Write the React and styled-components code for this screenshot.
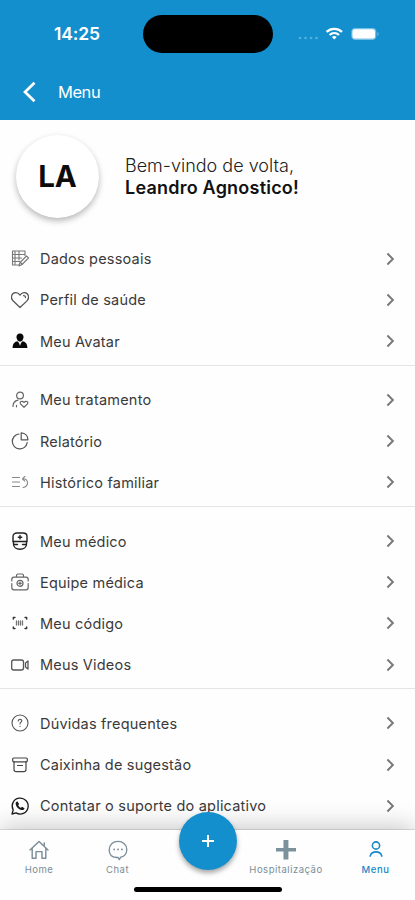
import React from 'react';
import styled, { createGlobalStyle } from 'styled-components';

const GlobalStyle = createGlobalStyle`
  * {
    box-sizing: border-box;
  }
  body {
    margin: 0;
    background: #fff;
    font-family: Inter, 'Liberation Sans', sans-serif;
  }
`;

const Screen = styled.div`
  width: 415px;
  height: 900px;
  display: flex;
  flex-direction: column;
  overflow: hidden;
  background: #fefefe;
`;

const Header = styled.header`
  flex: none;
  height: 119.5px;
  background: #148fcd;
  color: #fff;
`;

const StatusBar = styled.div`
  height: 67px;
  display: grid;
  grid-template-columns: 143px 130px 1fr;
  align-items: center;
`;

const Clock = styled.div`
  padding-left: 54px;
  font-size: 17.5px;
  font-weight: 600;
  letter-spacing: -0.15px;
`;

const Island = styled.div`
  height: 38px;
  border-radius: 19px;
  background: #000;
`;

const StatusIcons = styled.div`
  display: flex;
  align-items: center;
  padding-left: 24px;
  svg {
    display: block;
  }
`;

const TitleBar = styled.div`
  height: 50px;
  display: flex;
  align-items: center;
  padding-left: 22px;
  font-size: 16.5px;
  font-weight: 400;
  letter-spacing: -0.45px;
  svg {
    margin-right: 22px;
  }
`;

const Content = styled.main`
  flex: 1;
  min-height: 0;
  overflow: hidden;
`;

const Profile = styled.section`
  height: 118.6px;
  display: flex;
  align-items: flex-start;
  padding: 15px 0 0 16px;
`;

const Avatar = styled.div`
  width: 83px;
  height: 83px;
  margin-right: 26px;
  display: flex;
  align-items: center;
  justify-content: center;
  border-radius: 50%;
  background: #fff;
  box-shadow: 0 3px 6px rgba(0, 0, 0, 0.28);
  color: #0c0c0c;
  font-size: 29.5px;
  font-weight: 700;
`;

const Welcome = styled.div`
  padding-top: 20px;
  color: #222;
  font-size: 18px;
  font-weight: 300;
  line-height: 22px;
  white-space: nowrap;
  strong {
    display: block;
    color: #111;
    font-weight: 600;
    font-size: 18px;
    letter-spacing: 0.22px;
  }
`;

const Group = styled.ul`
  margin: 0 0 13.6px;
  padding: 0 0 3px;
  list-style: none;
  border-bottom: 1px solid #e4e4e4;
`;

const Row = styled.li`
  height: 41.2px;
  display: flex;
  align-items: center;
  padding: 0 18px 0 10px;
  color: #3a3a3a;
  > svg {
    flex: none;
  }
`;

const RowLabel = styled.span`
  flex: 1;
  margin-left: 10px;
  font-size: 14.5px;
  font-weight: 400;
  letter-spacing: 0.2px;
  white-space: nowrap;
`;

const TabBar = styled.nav`
  position: relative;
  flex: none;
  height: 70px;
  display: grid;
  grid-template-columns: 78px 79px 79px 100px 1fr;
  background: #fefefe;
  box-shadow: 0 -2px 26px rgba(0, 0, 0, 0.24);
`;

const Tab = styled.div`
  display: flex;
  flex-direction: column;
  align-items: center;
  padding-top: 9px;
  color: ${({ $active }) => ($active ? '#1688c9' : '#7b8d98')};
  font-size: 9.5px;
  font-weight: ${({ $active }) => ($active ? 500 : 400)};
  line-height: 12px;
  letter-spacing: 0.52px;
  white-space: nowrap;
  svg {
    margin-bottom: 2.5px;
  }
`;

const AddButton = styled.button`
  position: absolute;
  top: -18px;
  left: 179px;
  width: 58px;
  height: 58px;
  padding: 0;
  display: flex;
  align-items: center;
  justify-content: center;
  border: 0;
  border-radius: 50%;
  background: #148fcd;
  box-shadow: 0 3px 5px rgba(0, 0, 0, 0.35);
`;

const HomeIndicator = styled.div`
  position: absolute;
  left: 134px;
  bottom: 8px;
  width: 148px;
  height: 5px;
  border-radius: 3px;
  background: #000;
`;

const Icon = ({ size = 20, stroke = 1.2, color = 'currentColor', children }) => (
  <svg
    width={size}
    height={size}
    viewBox='0 0 20 20'
    fill='none'
    stroke={color}
    strokeWidth={stroke}
    strokeLinecap='round'
    strokeLinejoin='round'
  >
    {children}
  </svg>
);

const FormIcon = () => (
  <Icon color='#777' stroke={1.1}>
    <path d='M15 6.5V2H2.500v14H9M5 2v14M2.500 5.500H15M2.500 9h9M2.500 12.500h7M9 2v9' />
    <path d='M9 17l1-3.500 6.500-6.500 2 2-6.500 6.500zM10.500 13.500l2 2' />
  </Icon>
);

const HeartIcon = () => (
  <Icon color='#555'>
    <path d='M10 17.5L3 10.8C.2 8 1.3 3 5.5 2.7 7.8 2.5 9.2 4 10 5.2c.8-1.2 2.2-2.7 4.5-2.5 4.2.3 5.3 5.3 2.5 8.1z' />
    <path d='M13.5 5.6c1.5 0 2 .8 2 2' />
  </Icon>
);

const PersonIcon = () => (
  <Icon color='none'>
    <path
      fill='#080808'
      d='M10 2.6c-2.5 0-3.8 1.7-3.5 4 .2 2.3 1.7 4.100 3.500 4.100s3.300-1.800 3.500-4.100c.3-2.300-1-4-3.500-4zM7.400 10.300L10 13l2.600-2.700c3.300.9 4.600 2.400 4.800 6.800H2.600c.2-4.400 1.500-5.900 4.800-6.800z'
    />
    <path fill='#ddd' d='M9 12.100h2l-1 3z' />
  </Icon>
);

const CareIcon = () => (
  <Icon color='#666'>
    <circle cx='10' cy='5.500' r='3.400' />
    <path d='M3 16.500c0-3.500 2-5.700 5-6.300M6.500 16.800v-1.500M14 17.300l-3.300-3.200c-1.700-2.200 1.500-4 3.300-1.600 1.800-2.400 5-.6 3.300 1.600z' />
  </Icon>
);

const PieIcon = () => (
  <Icon color='#555'>
    <path d='M9 3a7.500 7.500 0 1 0 8.200 8.700M11.200 1.800v7h6.700c0-4-2.700-6.800-6.700-7z' />
  </Icon>
);

const HistoryIcon = () => (
  <Icon color='#888' stroke={1.1}>
    <path d='M2.500 5.500h7M2.500 10h7M2.500 14.500h7M13 15.500c6-1.300 6-8.700 0-8.700M14.800 4.500l-2.400 2.300 2.400 2.300' />
  </Icon>
);

const DoctorIcon = () => (
  <Icon color='#222' stroke={1.4}>
    <path d='M7 2h6c2.400 0 4 1.300 4 3.500v5H3v-5C3 3.300 4.600 2 7 2z' />
    <path d='M3.500 10.500v2.500c0 3 2.500 5.300 6.500 5.300s6.500-2.300 6.500-5.300v-2.500M4 13.500h3.500M12.500 13.500H16M10 4.500v3.400M8.300 6.200h3.400' />
  </Icon>
);

const KitIcon = () => (
  <Icon color='#666'>
    <path d='M6.500 5V3.500C6.500 2.300 7 2 8 2h4c1 0 1.500.3 1.500 1.500V5M1.800 9V7.500C1.800 6 2.500 5.200 4 5.200h12c1.500 0 2.200.8 2.200 2.300V9M1.800 11.500v4c0 1.500.7 2.300 2.200 2.300h12c1.500 0 2.200-.8 2.200-2.300v-4' />
    <circle cx='10' cy='11.300' r='3' />
    <path d='M10 10v2.600M8.700 11.300h2.600' />
  </Icon>
);

const CodeIcon = () => (
  <Icon color='#333' stroke={1.3}>
    <path d='M3.300 6.200V4.500H5M15 4.500h1.700v1.700M16.700 13.800v1.700H15M5 15.500H3.300v-1.700' />
    <path d='M6.500 8v4M8.500 8v4M10.500 8v4M12.500 8v4' stroke='#777' />
  </Icon>
);

const VideoIcon = () => (
  <Icon color='#555' stroke={1.3}>
    <rect x='1.700' y='5' width='11.800' height='10' rx='2' />
    <path d='M18 6l-2.500 2v4l2.500 2z' />
  </Icon>
);

const HelpIcon = () => (
  <Icon color='#555' stroke={1.1}>
    <circle cx='10' cy='10' r='8' />
    <path d='M8.300 8c0-2.300 3.700-2.200 3.500 0-.1 1.200-1.800 1.300-1.800 3M10 13.300v.2' />
  </Icon>
);

const BoxIcon = () => (
  <Icon color='#444'>
    <rect x='2.700' y='3' width='14.600' height='3.800' rx='1' />
    <path d='M4 6.800v7.700c0 1.500.8 2.200 2.200 2.200h7.600c1.400 0 2.200-.7 2.200-2.200V6.800M7.500 10.500h5' />
  </Icon>
);

const PhoneIcon = () => (
  <Icon color='#1a1a1a' stroke={1.3}>
    <path d='M2 18l1.200-4A8 8 0 1 1 6 16.900z' />
    <path
      fill='#1a1a1a'
      stroke='none'
      d='M7.300 5.200L5.700 6.400c-.5 4 3.400 8 7.600 7.700l1.400-1.700-2.600-1.600-1.200 1c-1.300-.5-2.100-1.400-2.700-2.600l.9-1.200z'
    />
  </Icon>
);

const Chevron = () => (
  <svg width='12' height='16' viewBox='0 0 12 16' fill='none' stroke='#777' strokeWidth='1.900'>
    <path d='M2.400 2.500L7.900 8l-5.500 5.500' />
  </svg>
);

const HomeIcon = () => (
  <Icon size={22} stroke={1.3}>
    <path d='M1.800 10L10 2.200 18.200 10M3.800 8.500v9h3.500v-6h5.400v6h3.500v-9M14.800 6V3.500' />
  </Icon>
);

const ChatIcon = () => (
  <Icon size={22}>
    <path d='M8.500 16.800C4 16.500 2 13.500 2 10c0-4.800 3.400-7.800 8-7.800s8 3 8 7.300c0 4-2.600 6.500-5.500 7l-1.300 2.300-1-2z' />
    <path d='M6.500 9.500h.1M10 9.500h.1M13.500 9.500h.1' strokeWidth='1.600' />
  </Icon>
);

const HospitalIcon = () => (
  <Icon size={22} stroke={0}>
    <path fill='#7b929d' d='M7.700.900h4.500v7.300h6.900v3.200h-6.900v7.300H7.700v-7.300H.9V8.200h6.800z' />
  </Icon>
);

const UserIcon = () => (
  <Icon size={22} stroke={1.4}>
    <circle cx='10' cy='5.900' r='3.300' />
    <path d='M4.700 15.600c.6-2.500 2.500-3.900 5.300-3.900s4.700 1.400 5.300 3.900' />
  </Icon>
);

const groups = [
  [
    { label: 'Dados pessoais', icon: FormIcon },
    { label: 'Perfil de saúde', icon: HeartIcon },
    { label: 'Meu Avatar', icon: PersonIcon },
  ],
  [
    { label: 'Meu tratamento', icon: CareIcon },
    { label: 'Relatório', icon: PieIcon },
    { label: 'Histórico familiar', icon: HistoryIcon },
  ],
  [
    { label: 'Meu médico', icon: DoctorIcon },
    { label: 'Equipe médica', icon: KitIcon },
    { label: 'Meu código', icon: CodeIcon },
    { label: 'Meus Videos', icon: VideoIcon },
  ],
  [
    { label: 'Dúvidas frequentes', icon: HelpIcon },
    { label: 'Caixinha de sugestão', icon: BoxIcon },
    { label: 'Contatar o suporte do aplicativo', icon: PhoneIcon },
  ],
];

export default function App() {
  return (
    <>
      <GlobalStyle />
      <Screen>
        <Header>
          <StatusBar>
            <Clock>14:25</Clock>
            <Island />
            <StatusIcons>
              <svg width='84' height='18' viewBox='0 0 84 18'>
                <g fill='#55b0dc'>
                  <circle cx='3' cy='13' r='1.300' />
                  <circle cx='8.500' cy='13' r='1.300' />
                  <circle cx='14' cy='13' r='1.300' />
                  <circle cx='19.500' cy='13' r='1.300' />
                </g>
                <g fill='none' stroke='#fff' strokeWidth='2.300'>
                  <path d='M29.600 6.900c4.300-4.100 11.100-4.100 15.400 0' />
                  <path d='M32.600 10c2.700-2.500 6.700-2.500 9.400 0' />
                </g>
                <path fill='#fff' d='M37.300 14.500l-2.400-2.500c1.400-1.200 3.400-1.200 4.800 0z' />
                <rect x='54.300' y='2.900' width='25' height='12' rx='3.800' fill='#75c0e4' />
                <rect x='55.500' y='4.200' width='22.500' height='9.400' rx='2.600' fill='#fff' />
                <path d='M80.500 7c1.500.6 1.500 3.400 0 4z' fill='#75c0e4' />
              </svg>
            </StatusIcons>
          </StatusBar>
          <TitleBar>
            <svg width='14' height='22' viewBox='0 0 14 22' fill='none' stroke='#fff' strokeWidth='2.700'>
              <path d='M12.500 1.800L3 11l9.500 9.200' />
            </svg>
            Menu
          </TitleBar>
        </Header>
        <Content>
          <Profile>
            <Avatar>LA</Avatar>
            <Welcome>
              Bem-vindo de volta,
              <strong>Leandro Agnostico!</strong>
            </Welcome>
          </Profile>
          {groups.map((items) => (
            <Group key={items[0].label}>
              {items.map(({ label, icon: ItemIcon }) => (
                <Row key={label}>
                  <ItemIcon />
                  <RowLabel>{label}</RowLabel>
                  <Chevron />
                </Row>
              ))}
            </Group>
          ))}
        </Content>
        <TabBar>
          <Tab>
            <HomeIcon />
            Home
          </Tab>
          <Tab>
            <ChatIcon />
            Chat
          </Tab>
          <div />
          <Tab>
            <HospitalIcon />
            Hospitalização
          </Tab>
          <Tab $active>
            <UserIcon />
            Menu
          </Tab>
          <AddButton aria-label='Adicionar'>
            <svg width='14' height='14' viewBox='0 0 14 14' stroke='#fff' strokeWidth='2'>
              <path d='M7 1v12M1 7h12' />
            </svg>
          </AddButton>
          <HomeIndicator />
        </TabBar>
      </Screen>
    </>
  );
}
